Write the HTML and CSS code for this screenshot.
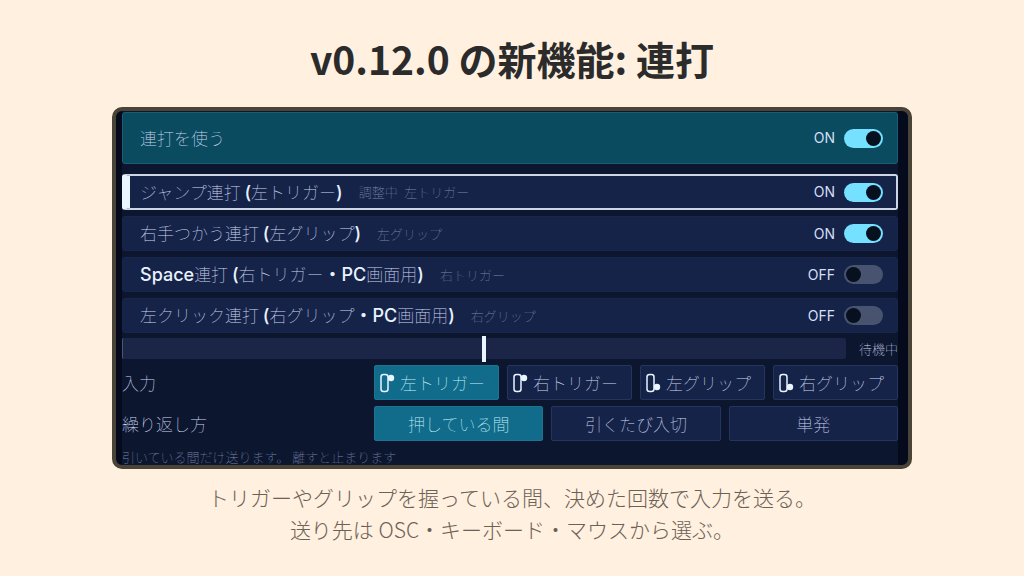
FILE: index.html
```html
<!DOCTYPE html>
<html lang="ja">
<head>
  <meta charset="UTF-8">
  <meta name="viewport" content="width=device-width, initial-scale=1">
  <title>v0.12.0 の新機能: 連打</title>
  <link rel="stylesheet" href="styles.css">
</head>
<body>
<main class="slide">
  <h1 class="title">v0.12.0 の新機能: 連打</h1>

  <section class="frame">
    <div class="panel">
      <label class="row row-master">
        <span class="name">連打を使う</span>
        <span class="state">ON</span>
        <input class="switch" type="checkbox" checked>
      </label>

      <div class="list">
        <label class="row row-selected">
          <span class="name">ジャンプ連打 <b>(</b>左トリガー<b>)</b></span>
          <span class="hint">調整中&ensp;左トリガー</span>
          <span class="state">ON</span>
          <input class="switch" type="checkbox" checked>
        </label>
        <label class="row">
          <span class="name">右手つかう連打 <b>(</b>左グリップ<b>)</b></span>
          <span class="hint">左グリップ</span>
          <span class="state">ON</span>
          <input class="switch" type="checkbox" checked>
        </label>
        <label class="row">
          <span class="name"><b>Space</b>連打 <b>(</b>右トリガー<b>・PC</b>画面用<b>)</b></span>
          <span class="hint">右トリガー</span>
          <span class="state">OFF</span>
          <input class="switch" type="checkbox">
        </label>
        <label class="row">
          <span class="name">左クリック連打 <b>(</b>右グリップ<b>・PC</b>画面用<b>)</b></span>
          <span class="hint">右グリップ</span>
          <span class="state">OFF</span>
          <input class="switch" type="checkbox">
        </label>
      </div>

      <div class="meter">
        <div class="meter-track"><div class="meter-mark"></div></div>
        <span class="meter-state">待機中</span>
      </div>

      <div class="field">
        <span class="field-name" id="input-name">入力</span>
        <div class="choices" role="group" aria-labelledby="input-name">
          <button class="choice choice-icon active" type="button" aria-pressed="true">
            <svg class="icon" viewBox="0 0 16 20"><rect x="2" y="1.5" width="7" height="17" rx="2.5"/><circle cx="12" cy="5" r="3.2"/></svg>
            左トリガー
          </button>
          <button class="choice choice-icon" type="button" aria-pressed="false">
            <svg class="icon" viewBox="0 0 16 20"><rect x="2" y="1.5" width="7" height="17" rx="2.5"/><circle cx="12" cy="5" r="3.2"/></svg>
            右トリガー
          </button>
          <button class="choice choice-icon" type="button" aria-pressed="false">
            <svg class="icon" viewBox="0 0 16 20"><rect x="2" y="1.5" width="7" height="17" rx="2.5"/><circle cx="12" cy="14" r="3.2"/></svg>
            左グリップ
          </button>
          <button class="choice choice-icon" type="button" aria-pressed="false">
            <svg class="icon" viewBox="0 0 16 20"><rect x="2" y="1.5" width="7" height="17" rx="2.5"/><circle cx="12" cy="14" r="3.2"/></svg>
            右グリップ
          </button>
        </div>
      </div>

      <div class="field">
        <span class="field-name" id="repeat-name">繰り返し方</span>
        <div class="choices" role="group" aria-labelledby="repeat-name">
          <button class="choice active" type="button" aria-pressed="true">押している間</button>
          <button class="choice" type="button" aria-pressed="false">引くたび入切</button>
          <button class="choice" type="button" aria-pressed="false">単発</button>
        </div>
      </div>

      <p class="note">引いている間だけ送ります。 離すと止まります</p>
    </div>
  </section>

  <p class="caption">トリガーやグリップを握っている間、決めた回数で入力を送る。<br>送り先は OSC・キーボード・マウスから選ぶ。</p>
</main>
</body>
</html>
```
FILE: styles.css
```css
* {
    box-sizing: border-box;
}

body {
    margin: 0;
    background-color: #fff0e0;
    font-family: "Noto Sans CJK JP", sans-serif;
}

.slide {
    padding: 30px 112px 24px;
}

.title {
    margin: 0 0 21px;
    color: #2b2b2b;
    font-size: 39px;
    font-weight: 700;
    line-height: 56px;
    text-align: center;
}

.frame {
    padding: 0 10px 0 6px;
    overflow: hidden;
    border: 4px solid #4a4438;
    border-radius: 10px;
    background-color: #050b1c;
}

/* 操作パネル */
.panel {
    padding-top: 1px;
    background-color: #0c162e;
    color: #ccd6f0;
    font-size: 17px;
    font-weight: 100;
    line-height: 24px;
}

.panel b {
    color: #e9f2ff;
    font-family: Inter, "Noto Sans CJK JP", sans-serif;
    font-size: 18px;
    font-weight: 500;
}

.list {
    display: flex;
    flex-direction: column;
    gap: 6px;
    margin: 10px 0 5px;
}

.row {
    display: flex;
    align-items: center;
    height: 35px;
    padding: 0 14px 0 17px;
    border: 1px solid #18264b;
    border-radius: 3px;
    background-color: #162348;
}

.row-master {
    height: 52px;
    border-color: #1a5d75;
    background-color: #0a4b60;
}

.row-selected {
    height: 36px;
    padding-right: 13px;
    padding-left: 10px;
    border: 2px solid #ccd6e8;
    border-left: 8px solid #e9f5ff;
}

.hint {
    margin-left: 16px;
    color: #7986aa;
    font-size: 13px;
}

.state {
    margin-left: auto;
    color: #d5dff5;
    font-family: Inter, sans-serif;
    font-size: 14px;
    font-weight: 400;
}

.switch {
    flex: none;
    width: 39px;
    height: 19px;
    margin: 0 0 0 9px;
    padding: 2px;
    appearance: none;
    border-radius: 10px;
    background-color: #48546f;
}

.switch::before {
    content: "";
    display: block;
    width: 15px;
    height: 15px;
    border-radius: 50%;
    background-color: #07101f;
}

.switch:checked {
    background-color: #75e0ff;
}

.switch:checked::before {
    margin-left: auto;
}

.meter {
    display: flex;
    align-items: center;
    gap: 13px;
    height: 21px;
    margin-bottom: 6px;
}

.meter-track {
    display: flex;
    flex: 1;
    align-items: center;
    justify-content: center;
    height: 21px;
    border-left: 1px solid #4a5674;
    border-radius: 2px;
    background-color: #1a2547;
}

.meter-mark {
    flex: none;
    width: 4px;
    height: 26px;
    background-color: #e9f5ff;
}

.meter-state {
    font-size: 13px;
}

.field {
    display: flex;
    align-items: center;
    margin-bottom: 6px;
}

.field-name {
    width: 252px;
}

.choices {
    display: flex;
    flex: 1;
    gap: 8px;
}

.choice {
    display: flex;
    flex: 1;
    align-items: center;
    justify-content: center;
    height: 35px;
    padding: 0;
    border: 1px solid #24365f;
    border-radius: 2px;
    background-color: #162348;
    color: #ccd6f0;
    font: inherit;
}

.choice-icon {
    justify-content: flex-start;
    gap: 5px;
    padding-left: 4px;
}

.choice.active {
    border-color: #1b7592;
    background-color: #106c8a;
    color: #c8effb;
}

.icon {
    width: 16px;
    height: 20px;
    fill: none;
    stroke: #e9f5ff;
    stroke-width: 1.5;
}

.icon circle {
    fill: #e9f5ff;
    stroke: none;
}

.note {
    height: 18px;
    margin: 0;
    padding-top: 1px;
    color: #7986aa;
    font-size: 13px;
    line-height: 18px;
}

.caption {
    margin: 12px 0 0;
    color: #6b6155;
    font-size: 21px;
    font-weight: 300;
    line-height: 32px;
    text-align: center;
}
```
